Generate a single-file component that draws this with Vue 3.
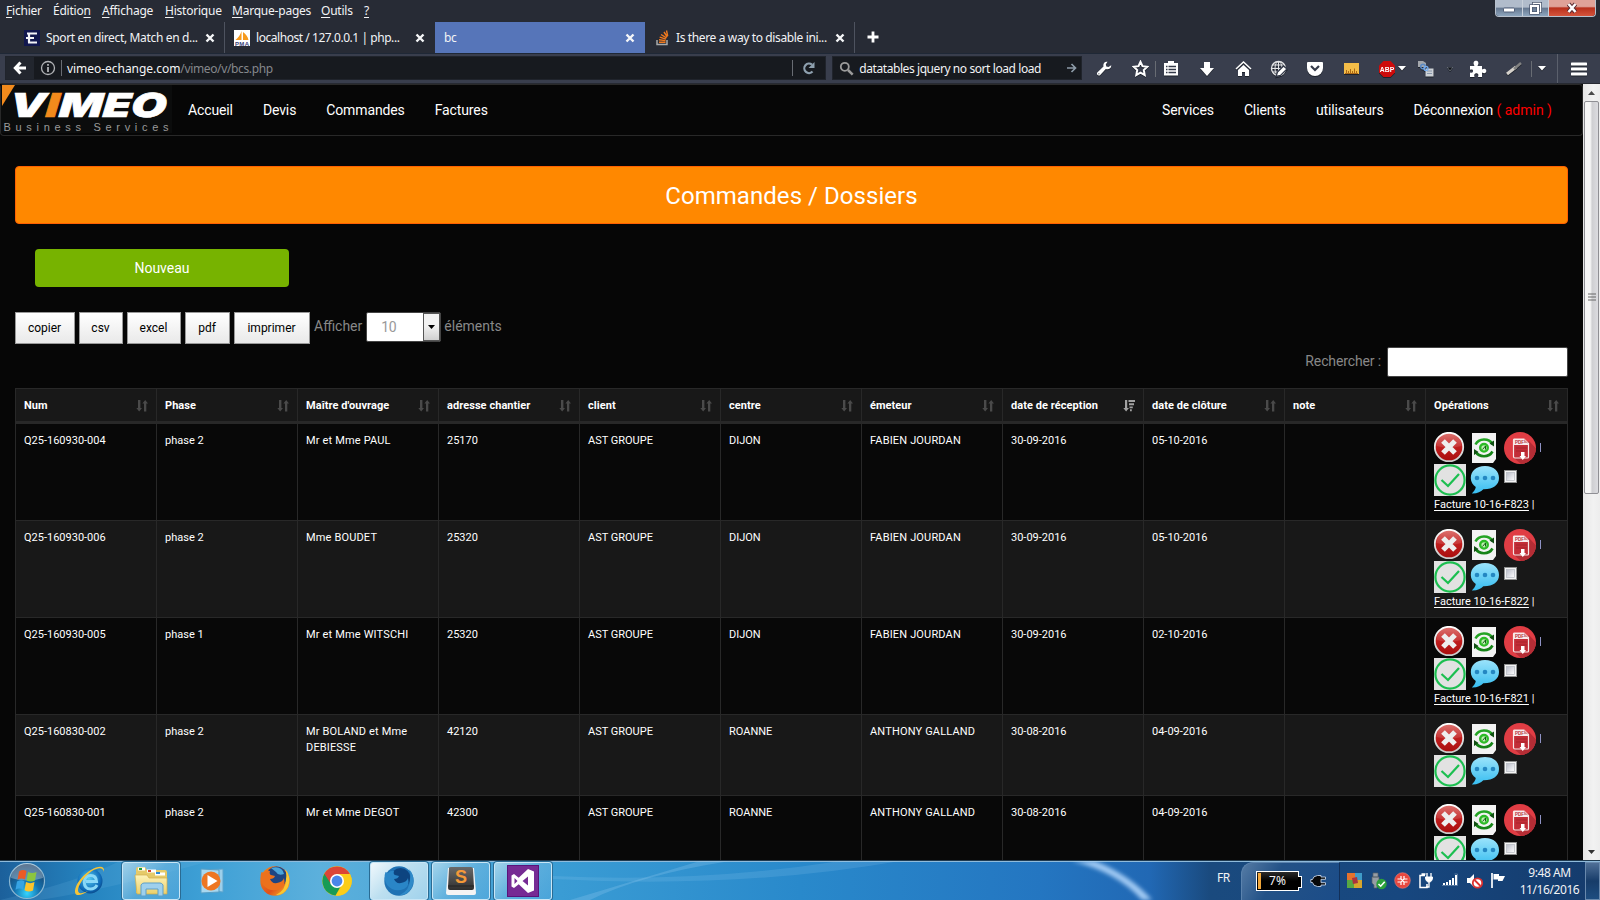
<script setup>
const menu = [['F', 'ichier', ''], ['', 'Éditio', 'n'], ['A', 'ffichage', ''], ['H', 'istorique', ''], ['M', 'arque-pages', ''], ['O', 'utils', ''], ['?', '', '']]
const menuWidths = [47, 49, 63, 67, 89, 43, 20]
const navLeft = ['Accueil', 'Devis', 'Commandes', 'Factures']
const exportsList = [['copier', 60], ['csv', 44], ['excel', 54], ['pdf', 45], ['imprimer', 76]]
const heads = ['Num', 'Phase', "Maître d'ouvrage", 'adresse chantier', 'client', 'centre', 'émeteur', 'date de réception', 'date de clôture', 'note', 'Opérations']
const rows = [
  { cells: ['Q25-160930-004', 'phase 2', 'Mr et Mme PAUL', '25170', 'AST GROUPE', 'DIJON', 'FABIEN JOURDAN', '30-09-2016', '05-10-2016', ''], bill: 'Facture 10-16-F823' },
  { cells: ['Q25-160930-006', 'phase 2', 'Mme BOUDET', '25320', 'AST GROUPE', 'DIJON', 'FABIEN JOURDAN', '30-09-2016', '05-10-2016', ''], bill: 'Facture 10-16-F822' },
  { cells: ['Q25-160930-005', 'phase 1', 'Mr et Mme WITSCHI', '25320', 'AST GROUPE', 'DIJON', 'FABIEN JOURDAN', '30-09-2016', '02-10-2016', ''], bill: 'Facture 10-16-F821' },
  { cells: ['Q25-160830-002', 'phase 2', 'Mr BOLAND et Mme DEBIESSE', '42120', 'AST GROUPE', 'ROANNE', 'ANTHONY GALLAND', '30-08-2016', '04-09-2016', ''], bill: '' },
  { cells: ['Q25-160830-001', 'phase 2', 'Mr et Mme DEGOT', '42300', 'AST GROUPE', 'ROANNE', 'ANTHONY GALLAND', '30-08-2016', '04-09-2016', ''], bill: '' },
]
</script>

<template>
  <div class="screen">
    <svg class="defs" width="0" height="0">
      <defs>
        <linearGradient id="gRed" x1="0" y1="0" x2="0" y2="1"><stop offset="0" stop-color="#d9605c" /><stop offset=".45" stop-color="#c22020" /><stop offset="1" stop-color="#a80d0d" /></linearGradient>
        <linearGradient id="gRing" x1="0" y1="0" x2="0" y2="1"><stop offset="0" stop-color="#fff" /><stop offset="1" stop-color="#c9c9c9" /></linearGradient>
        <linearGradient id="gBubble" x1="0" y1="0" x2="0" y2="1"><stop offset="0" stop-color="#9be3fb" /><stop offset="1" stop-color="#37bdf0" /></linearGradient>
        <linearGradient id="gCheck" x1="0" y1="0" x2="1" y2="1"><stop offset="0" stop-color="#b9bcc8" /><stop offset="1" stop-color="#fff" /></linearGradient>
        <linearGradient id="gFolder" x1="0" y1="0" x2="0" y2="1"><stop offset="0" stop-color="#fdf3b8" /><stop offset="1" stop-color="#ecd06c" /></linearGradient>
        <radialGradient id="gOrb" cx=".5" cy=".85" r=".8"><stop offset="0" stop-color="#35d5ff" /><stop offset=".45" stop-color="#1471ae" /><stop offset="1" stop-color="#1a3f66" /></radialGradient>
        <linearGradient id="gFox" x1="0" y1="0" x2="1" y2="1"><stop offset="0" stop-color="#f28a1c" /><stop offset=".6" stop-color="#e2521b" /><stop offset="1" stop-color="#f9c32c" /></linearGradient>
        <linearGradient id="gSub" x1="0" y1="0" x2="0" y2="1"><stop offset="0" stop-color="#6a6a6a" /><stop offset="1" stop-color="#2f2f2f" /></linearGradient>
        <radialGradient id="gIE" cx=".45" cy=".4" r=".7"><stop offset="0" stop-color="#55cdf5" /><stop offset=".7" stop-color="#0d67b5" /><stop offset="1" stop-color="#083970" /></radialGradient>
      </defs>
      <symbol id="sx" viewBox="0 0 10 10"><path d="M1.5 1.5 8.5 8.5M8.5 1.5 1.5 8.5" stroke="#f5f6f8" stroke-width="2.4" /></symbol>
    </svg>

    <header class="menubar">
      <div class="menu">
        <span v-for="(m, i) in menu" :key="i" :style="{ width: menuWidths[i] + 'px' }"><u>{{ m[0] }}</u>{{ m[1] }}<u>{{ m[2] }}</u></span>
      </div>
      <div class="winbtns">
        <span class="wb min"><svg width="14" height="8"><rect x="1.5" y="2" width="11" height="4" rx="1" fill="#fff" stroke="#53607a" /></svg></span>
        <span class="wb mid"><svg width="13" height="13" fill="none"><path d="M4.5 3V1.5h7v8H10" stroke="#4a566d" stroke-width="3" /><path d="M4.5 3V1.5h7v8H10" stroke="#fff" stroke-width="1.4" /><rect x="2" y="4" width="7" height="7" stroke="#4a566d" stroke-width="3.4" /><rect x="2" y="4" width="7" height="7" stroke="#fff" stroke-width="2" /></svg></span>
        <span class="wb shut"><svg width="14" height="12"><path d="m3.5 2 7 8m0-8-7 8" stroke="#5b2e33" stroke-width="4.4" /><path d="m3.5 2 7 8m0-8-7 8" stroke="#fff" stroke-width="2.5" /></svg></span>
      </div>
    </header>

    <div class="tabs">
      <div class="tab t1">
        <svg width="16" height="16"><rect width="16" height="16" fill="#11174e" /><path d="M3 3.5h10M5 3.5v9M2 8h8M4 12.5h9" stroke="#f3f4f8" stroke-width="2.2" /></svg>
        <span class="tt">Sport en direct, Match en d...</span><svg class="x" width="10" height="10"><use href="#sx" /></svg>
      </div>
      <div class="tab t2">
        <svg width="16" height="16"><rect width="16" height="16" fill="#fff" /><path d="M7.5 1v9H1.5C4 8 6.5 5 7.5 1zM9 2c3 2 5 5 5.500 8H9z" fill="#f79a1c" /><text x="1" y="15.600" font-family="Liberation Sans" font-size="6" font-weight="700" textLength="14" fill="#3a3e78">PMA</text></svg>
        <span class="tt">localhost / 127.0.0.1 | php...</span><svg class="x" width="10" height="10"><use href="#sx" /></svg>
      </div>
      <div class="tab t3"><span class="tt">bc</span><svg class="x" width="10" height="10"><use href="#sx" /></svg></div>
      <div class="tab t4">
        <svg width="13" height="16" fill="none"><path d="M1 10v4.500h10V10" stroke="#a9aaab" stroke-width="1.500" /><path d="M3 12.300h6.500M3 9.800l6.500.8M3.700 7.200l6.300 1.900M5 4.500l5.500 3.400M8 2l3.300 5M10.500 .5l1.200 5.500" stroke="#f17a1e" stroke-width="1.400" /></svg>
        <span class="tt">Is there a way to disable ini...</span><svg class="x" width="10" height="10"><use href="#sx" /></svg>
      </div>
      <svg class="plus" width="14" height="14"><path d="M7 1.500v11M1.500 7h11" stroke="#fff" stroke-width="2.800" /></svg>
    </div>

    <div class="toolbar">
      <div class="url">
        <span class="back"><svg width="14" height="14" fill="none" stroke="#fff" stroke-width="3"><path d="M7.500 1.500 2.300 7l5.200 5.500M2.500 7H13" /></svg></span>
        <svg class="info" width="16" height="16" fill="none" stroke="#b1b3b6"><circle cx="8" cy="8" r="6.500" stroke-width="1.300" /><path d="M8 7v5M8 4v1.800" stroke-width="1.800" /></svg>
        <i class="vr"></i>
        <span class="addr"><b>vimeo-echange.com</b>/vimeo/v/bcs.php</span>
        <i class="vr r"></i>
        <svg class="reload" width="14" height="14" fill="none"><path d="M10.500 10.500A4.700 4.700 0 1 1 10 3.700" stroke="#8ea0af" stroke-width="2.200" /><path d="M12.500 1v6h-6z" fill="#8ea0af" /></svg>
      </div>
      <div class="search">
        <svg width="15" height="15" fill="none" stroke="#9b9b9b"><circle cx="5.800" cy="5.800" r="4" stroke-width="1.800" /><path d="m9 9 4.700 4.700" stroke-width="2.500" /></svg>
        <span>datatables jquery no sort load load</span>
        <svg width="10" height="10" fill="none" stroke="#8d9ba8" stroke-width="1.700"><path d="M0 5h8M4.500 1l4 4-4 4" /></svg>
      </div>
      <div class="tools">
        <span class="w36"><svg width="16" height="16"><path d="M15.200 4.200 12.500 6 10.300 5.500 9.800 3.500 11.500.8C8.600.2 6.700 2.700 7.500 5.500L1.300 11.500c-1.200 1.500.8 4 2.700 2.700L9.800 8c2.900 1.200 5.800-.7 5.400-3.800zM3.500 12.800a.6.6 0 1 1-1.200 0 .6.6 0 0 1 1.200 0" fill="#fff" /></svg></span>
        <span class="w36"><svg width="17" height="17"><path d="m8.500 1.800 2 4.400 4.800.6-3.500 3.300.9 4.900-4.200-2.400-4.200 2.400.9-4.900-3.500-3.300 4.800-.6z" fill="none" stroke="#fff" stroke-width="2" /></svg></span>
        <i class="vr star"></i>
        <span class="w36 list"><svg width="16" height="17"><path d="M1 3h4V1h6v2h4v12.500H1z" fill="#fff" /><path d="M3 6.500h1.500m1 0H13M3 9.500h1.500m1 0H13M3 12.500h1.500m1 0H13" stroke="#343a49" stroke-width="1.400" /></svg></span>
        <span class="w36"><svg width="16" height="16"><path d="M5 1h6v6h4l-7 8-7-8h4z" fill="#fff" /></svg></span>
        <span class="w36"><svg width="17" height="16"><path d="m1 8 7.500-7L16 8" fill="none" stroke="#fff" stroke-width="1.500" /><path d="m3 9 5.500-5L14 9v6h-4v-4H7v4H3z" fill="#fff" /></svg></span>
        <span class="w36"><svg width="18" height="18" fill="none" stroke="#e4e5e7"><circle cx="8.500" cy="8.500" r="7" stroke-width="1.400" /><ellipse cx="8.500" cy="8.500" rx="3.500" ry="7" /><path d="M8.500 1v15M1.500 8.500h14M2.500 5h12M2.500 12h12" /><path d="m6 16.500 1.500-4.500 6-6 3.500 3-6.500 6.500z" fill="#fff" stroke="#343a49" stroke-width="1.300" /></svg></span>
        <span class="w36"><svg width="18" height="16"><path d="M2 1h14q1 0 1 1v5a8 8 0 0 1-16 0V2q0-1 1-1z" fill="#fff" /><path d="m5 5 4 4 4-4" fill="none" stroke="#343a49" stroke-width="2.200" /></svg></span>
        <span class="w36"><svg width="15" height="12"><rect width="15" height="11" fill="#f4bd48" /><path d="M1 10.500h13M2.500 10V7M4.500 10V8M6.500 10V6M8.500 10V8M10.500 10V5.500M12.500 10V8" stroke="#ad6815" /></svg></span>
        <span class="w36 abp"><svg width="18" height="18"><path d="M5.500 1h7L17 5.500v7L12.500 17h-7L1 12.500v-7z" fill="#cd0b0b" /><text x="1.800" y="11.800" fill="#fff" font-size="7.500" font-weight="700" font-family="Liberation Sans" textLength="14.500" lengthAdjust="spacingAndGlyphs">ABP</text></svg><svg class="caret" width="8" height="5"><path d="M0 0h8L4 4.500z" fill="#fff" /></svg></span>
        <span class="gray"><svg width="17" height="17"><path d="M1 1h5l3 2v4H1z" fill="#a4a7ac" /><rect x="8.500" y="8.500" width="8" height="8" fill="#cdd1d6" /><path d="M10 11h5M10 13.500h5" stroke="#8897ab" /><circle cx="6" cy="6.500" r="2.300" fill="none" stroke="#5d8bc4" stroke-width="1.500" /><circle cx="9" cy="8.500" r="2" fill="none" stroke="#78aef0" stroke-width="1.300" /></svg></span>
        <span class="tiny"><svg width="6" height="4"><path d="M0 0h6L3 4z" fill="#11141a" stroke="#8a909b" stroke-width=".6" /></svg></span>
        <span class="w36 puzzle"><svg width="18" height="18"><path d="M1 6h4.500C3.500 2.800 5 .8 7 .8s3.500 2 1.500 5.200H13v3.500c3-1.500 4.300-.3 4.300 1.500S15.700 14 13 12.500V17H9c1-2.800-.2-3.700-1.700-3.700S4.600 14.500 5.500 17H1v-4.500c2.500.8 3-.3 3-1.500S3.500 9 1 9.800z" fill="#fff" /></svg></span>
        <span class="w36 pen"><svg width="16" height="14"><path d="m1 12 9-7" stroke="#d5d1cb" stroke-width="3" /><path d="m8 7 7-6" stroke="#818181" stroke-width="2.500" /></svg></span>
        <i class="vr p"></i>
        <span class="drop"><svg width="8" height="5"><path d="M0 0h8L4 4.500z" fill="#fff" /></svg></span>
        <span class="burger"><svg width="16" height="14"><path d="M1 2h14M1 7h14M1 12h14" stroke="#fff" stroke-width="3" stroke-linecap="round" /></svg></span>
      </div>
    </div>

    <div class="view">
      <main class="page">
        <nav class="navbar">
          <svg class="logo" width="171" height="48">
            <rect width="171" height="48" fill="#0b0c0c" />
            <path d="M1 0h13L1 21z" fill="#f28a1c" />
            <g transform="translate(8 32) skewX(-4)"><text x="0" y="0" font-family="Inter" font-size="33" font-weight="900" font-style="italic" fill="#fff" stroke="#fff" stroke-width=".6" textLength="157" lengthAdjust="spacingAndGlyphs">V<tspan fill="#f28a1c" stroke="#f28a1c">I</tspan>MEO</text></g>
            <text x="2.500" y="45.500" font-family="Liberation Sans" font-size="11" fill="#9a9a9a" textLength="165">Business Services</text>
          </svg>
          <a v-for="n in navLeft" :key="n">{{ n }}</a>
          <span class="grow"></span>
          <a>Services</a><a>Clients</a><a>utilisateurs</a><a>Déconnexion <em>( admin )</em></a>
        </nav>
        <h1 class="banner">Commandes / Dossiers</h1>
        <div class="new">Nouveau</div>
        <div class="controls">
          <button v-for="b in exportsList" :key="b[0]" :style="{ width: b[1] + 'px' }">{{ b[0] }}</button>
          <label>Afficher</label>
          <span class="select"><span>10</span><i><svg width="7" height="4"><path d="M0 0h7L3.500 4z" fill="#000" /></svg></i></span>
          <label>éléments</label>
        </div>
        <div class="find"><label>Rechercher :</label><span class="input"></span></div>
        <div class="table">
          <div class="tr th">
            <div v-for="(h, i) in heads" :key="h" class="td">
              <span>{{ h }}</span>
              <svg v-if="i !== 7" width="12" height="12"><path d="M2 0h2.400v8H6L3.200 11.500.3 8H2zM8 11.500h2.300v-8H12L9.200 0 6.400 3.500H8z" fill="#4a4a4a" /></svg>
              <svg v-else width="12" height="12"><path d="M2 0h2.200v8H6l-2.900 3.500L.3 8H2zM5.500 0H12v2H5.500zM6 3.200h5v2H6zM6.500 6.400h3.300v1.800H6.500zM7 9.300h1.800v1.900H7z" fill="#a1a1a1" /></svg>
            </div>
          </div>
          <div v-for="(r, ri) in rows" :key="ri" class="tr" :class="{ alt: ri % 2 }">
            <div v-for="(c, ci) in r.cells" :key="ci" class="td cell" :class="{ name: ci === 2 || ci === 6 }">{{ c }}</div>
            <div class="td ops">
              <div class="line">
                <svg width="32" height="32"><circle cx="15" cy="15" r="14.200" fill="url(#gRed)" stroke="url(#gRing)" stroke-width="1.800" /><path d="M2.500 14a12.500 12.500 0 0 1 25 0q-12 3-25 0" fill="#fff" opacity=".12" /><path d="m9 9 12 12M21 9 9 21" stroke="#eee" stroke-width="5.200" /></svg>
                <svg class="doc" width="26" height="32"><path d="M0 1h24v26l-3 4H0z" fill="#f3f3f3" /><g fill="none" stroke-width="2.600"><path d="M3.500 12.500A9.500 8.500 0 0 1 20.500 12" stroke="#24a424" /><path d="M20.500 19.500A9.500 8.500 0 0 1 3.500 19.500" stroke="#158316" /><circle cx="12" cy="15.800" r="3.800" fill="#bdf0b0" stroke="#2dbb27" stroke-width="2.400" /></g><path d="m17.500 11.500 4.500-3v6zM6.500 20l-4.500 3v-6z" fill="#124f14" /><path d="m10.500 17.500 3-3.500v3.500" fill="none" stroke="#155b18" /></svg>
                <svg class="pdf" width="32" height="32"><circle cx="16" cy="16" r="16" fill="#e03d44" /><path d="M25 9l7 7.500A16 16 0 0 1 17 32l-7-6z" fill="#b52d35" /><path d="M10 7h10l4.500 4.500V25q0 1-1 1H11q-1.500 0-1.500-1.500V8q0-1 .5-1z" fill="#c22d37" stroke="#f7e8e8" stroke-width="1.200" /><path d="M10 7h10l4 4.500V13H10z" fill="#f7ecec" /><path d="M20 7v4h4z" fill="#d68e90" /><text x="11" y="11.800" font-family="Liberation Sans" font-weight="700" font-size="4.500" fill="#b52d35" textLength="9">PDF</text><path d="M12 16h11M12 19h11" stroke="#a9252c" /><path d="M17 20h3.500v4H22l-3.200 4-3.300-4H17z" fill="#fff" /></svg>
                <i class="bar"></i>
              </div>
              <div class="line second">
                <svg width="32" height="32"><rect width="32" height="32" fill="#e2e2e2" /><circle cx="16" cy="16" r="14.600" fill="none" stroke="#1cbf50" stroke-width="2.200" /><path d="m7.500 16 6.500 6L25 10" fill="none" stroke="#1cbf50" stroke-width="2.200" /></svg>
                <svg class="bubble" width="30" height="32"><path d="M15 2C6 2 .8 7 .8 14c0 4 2 7 5 9-.3 2.500-2 4.500-4 6.500 5 .3 9-1.500 11.500-4.200C23 25.500 29 21 29 14S24 2 15 2z" fill="url(#gBubble)" /><g fill="#2487c2"><circle cx="7" cy="14" r="2.300" /><circle cx="15" cy="14" r="2.300" /><circle cx="23" cy="14" r="2.300" /></g></svg>
                <svg class="cb" width="13" height="13"><rect x=".5" y=".5" width="12" height="12" fill="#f4f4f4" stroke="#8e8f8f" /><rect x="2.500" y="2.500" width="8" height="8" fill="url(#gCheck)" stroke="#b6b9c0" stroke-width=".7" /></svg>
              </div>
              <div v-if="r.bill" class="bill"><a>{{ r.bill }}</a> |</div>
            </div>
          </div>
        </div>
      </main>
      <aside class="scroll">
        <svg width="17" height="17"><path d="m5 11 3.500-4 3.500 4z" fill="#4a4a4a" /></svg>
        <div class="thumb"><svg width="8" height="9"><path d="M0 1h8M0 4h8M0 7h8" stroke="#666" /></svg></div>
        <span class="grow"></span>
        <svg width="17" height="17"><path d="m5 7 3.500 4L12 7z" fill="#333" /></svg>
      </aside>
    </div>

    <footer class="taskbar">
      <svg class="streaks" width="1600" height="39" preserveAspectRatio="none"><path d="M120 0h90Q110 28 40 39H0Q80 20 120 0z" fill="#7fc3e8" opacity=".15" /><path d="M590 39Q640 14 730 0h-30Q640 18 570 39z" fill="#9bd0f5" opacity=".25" /><path d="M553 18Q740 28 900 0h-60Q700 22 553 15z" fill="#9bd0f5" opacity=".17" /><path d="M1072 0q45 11 70 39h10Q1130 14 1095 0z" fill="#b9dcff" opacity=".85" class="glow" /></svg>
      <div class="orb"><svg width="38" height="38"><circle cx="19" cy="19" r="17.500" fill="url(#gOrb)" stroke="#8bb7d2" stroke-width="1.200" /><path d="M3 16a16 15 0 0 1 32 0q-16 5-32 0" fill="#fff" opacity=".3" /><path d="M11 9.500q4-2.500 7.500-.5l-1.500 8.500q-4-2-7.500.3z" fill="#ed5b25" /><path d="M20 10q4 2 8.500 0L27 18.500q-4 2-8.500 0z" fill="#8bc53f" /><path d="M9 19.500q4-2.500 7.500-.3L15 27.500q-3.500-2-7.500.2z" fill="#36a4e4" /><path d="M18 20q4 2.300 8.500 0L25 28.500q-4.500 2-8.500-.3z" fill="#fcc42c" /></svg></div>
      <div class="app"><svg width="36" height="36"><circle cx="19" cy="18" r="12.500" fill="url(#gIE)" /><path d="M26 22q-2 4-6.500 4-6 0-6.300-7 .5-6.500 6.500-6.500 5.500 0 5.800 6H15" fill="none" stroke="#8ad8f7" stroke-width="3" /><path d="M33 9Q34 2 25 4.500C15 8 4 20 4 29c.5 6 9 2 13-1-7 3-10 3-10-1C8 19 19 7 27 5.500q5-1 6 3.500z" fill="#f6c438" /></svg></div>
      <div class="app on"><svg width="36" height="32"><path d="M3 4q0-2 2-2h7l2 3h18q2 0 2 2v21H3z" fill="#e5ca69" /><path d="M5 4h7M14 6h9M22 9h10" stroke="#fff" stroke-width="3" /><path d="M6 4h3" stroke="#1a9a3c" stroke-width="2" /><path d="M15 6h3" stroke="#d5422a" stroke-width="2" /><path d="M23 8h4" stroke="#2a8ad5" stroke-width="2" /><path d="M2 10h12l2 3h18v16H4z" fill="url(#gFolder)" stroke="#cfae4b" stroke-width=".7" /><path d="M8 31V20q1-2 3-2h16q2 0 3 2v11h-5v-7H13v7z" fill="#9ed0ed" stroke="#5c9fc9" /></svg></div>
      <div class="app"><svg width="34" height="32"><path d="m7 5 20-1v23l-20-2z" fill="#9dcfea" stroke="#5ca4cd" /><path d="m5 4 18 1v22l-18 1z" fill="#a8d8f0" stroke="#599fc5" /><circle cx="15" cy="16" r="9.500" fill="#ee7621" /><path d="m11.500 10 10 6-10 6z" fill="#fff" /></svg></div>
      <div class="app"><svg width="32" height="32"><circle cx="16" cy="16" r="14.700" fill="url(#gFox)" /><circle cx="17.500" cy="12" r="10.500" fill="#1d4583" /><path d="M12 3Q23 0 25 9q-6 2-8-2z" fill="#4aa5db" /><path d="M2.500 7 5 8q3-3 6-2-1 3 1 4l4 1q-1 3-5 3 2 5 7 4 6-1 7-5 2 8-4 11-10 4-17-4-4-7-1.500-13z" fill="#ec711d" /><path d="M26 4q7 8 3 18-5 9-12 8 10-5 10-16 1-6-1-10z" fill="#fac831" /></svg></div>
      <div class="app"><svg width="32" height="32"><circle cx="16" cy="16" r="14.700" fill="#fbc916" /><path d="M3.300 8.700A14.700 14.700 0 0 0 14.500 30.600L21 19z" fill="#179b56" /><path d="M16 9h12.900A14.700 14.700 0 0 1 15 30.700L22 19.300z" fill="#fccd1a" /><path d="M3.300 8.700A14.700 14.700 0 0 1 28.900 9H16l-6 10z" fill="#dc4537" /><circle cx="16" cy="16" r="7" fill="#fff" /><circle cx="16" cy="16" r="5.400" fill="#4a86ea" /></svg></div>
      <div class="app on bright"><svg width="32" height="32"><circle cx="16" cy="16" r="14.700" fill="#1f72b4" /><circle cx="17.500" cy="13" r="10" fill="#0d4480" /><path d="M2.500 7 5 8q3-3 6-2-1 3 1 4l4 1q-1 3-5 3 2 5 7 4 6-1 7-5 2 8-4 11-10 4-17-4-4-7-1.500-13z" fill="#2a86c7" /><path d="M26 4q7 8 3 18-5 9-12 8 10-5 10-16 1-6-1-10z" fill="#2f8ac9" /></svg></div>
      <div class="app on"><svg width="32" height="30"><path d="M3 2h26l2 25q0 2-2 2H3q-2 0-2-2z" fill="#f4f4f4" /><path d="M4 2q0-1 2-1h20q2 0 2 2l1 19q0 2-2 2H5q-2 0-2-2z" fill="url(#gSub)" /><text x="10" y="17" font-family="Liberation Sans" font-size="18" font-weight="700" fill="#f49938" textLength="12" lengthAdjust="spacingAndGlyphs">S</text><path d="M3 20h26" stroke="#222" /></svg></div>
      <div class="app on"><svg width="32" height="32"><rect x=".5" y=".5" width="31" height="31" fill="#762b94" stroke="#5a137a" /><path fill-rule="evenodd" d="m21 4 6 2.500v19L21 28l-9.300-8.700L7 23l-2.500-1.500v-11L7 9l4.700 3.700zM21 11.500 15.500 16l5.500 4.500zM7.500 13v6l3-3z" fill="#fff" /></svg></div>
      <span class="grow"></span>
      <span class="lang">FR</span>
      <div class="power">
        <span class="battery"><i></i>7%</span>
        <svg width="17" height="14"><path d="M11 3V1.500H7.500Q3 2 2.500 5.500H.8v3h1.700Q3 12 7.500 12.500H11V11h4.500V8.700H11V5.300h4.500V3z" fill="#080808" stroke="#c4d2e6" stroke-width=".9" /></svg>
      </div>
      <div class="tray">
        <span><svg width="17" height="17"><path d="M1 1h8v7H1z" fill="#e4722d" /><path d="M9 1h7v8H9z" fill="#3f9bc8" /><path d="M1 8h7v8H1z" fill="#58a843" /><path d="M8 8h8v8H8z" fill="#d7a62d" /><path d="M6 6 11 5l1 6-5 1z" fill="#a9333d" /></svg></span>
        <span><svg width="17" height="18"><path d="M3 1h5v4H3zM2 5h7v6l-2 2v3H4v-3l-2-2z" fill="#969da5" stroke="#575f69" stroke-width=".7" /><circle cx="11.500" cy="12" r="5.200" fill="#2ca13a" /><path d="m8.500 12 2.200 2.200 4-4.500" fill="none" stroke="#fff" stroke-width="1.600" /></svg></span>
        <span><svg width="17" height="17"><circle cx="8.500" cy="8.500" r="7.800" fill="#e7473f" stroke="#ef817b" stroke-width=".6" /><path d="M7 4v3H3.500M10 4v3h3.500M7 13v-3H3.500M10 13v-3h3.500M7 7l3 3M10 7l-3 3" fill="none" stroke="#fff" stroke-width="1.200" /></svg></span>
        <span><svg width="16" height="17" fill="none" stroke="#fff"><path d="M7 3.500H2v12h7V12M3.500 2h4" stroke-width="1.500" /><path d="M9 1v4M13 1v4M11 10v5H8" stroke-width="1.300" /><path d="M7.500 5h7q0 5-3.500 5t-3.500-5z" fill="#fff" /></svg></span>
        <span><svg width="17" height="15"><path d="M1 11h2v2H1zM4 10h2v3H4zM7 8h2v5H7zM10 6h2v7h-2zM13 3h2v10h-2z" fill="#fff" /><path d="M12.500 2h3v11.500H0" fill="none" stroke="#809ab8" stroke-width=".6" /></svg></span>
        <span><svg width="17" height="17"><path d="M1 6h3l4-4v13l-4-4H1z" fill="#fff" /><circle cx="11.500" cy="11" r="4.700" fill="#fff" stroke="#db3030" stroke-width="1.800" /><path d="m8.500 8 6 6" stroke="#db3030" stroke-width="1.800" /></svg></span>
        <span><svg width="16" height="17"><path d="M2 1v15" stroke="#fff" stroke-width="1.700" /><path d="M3.500 2H9v2h6l-2.500 5H8V7.500H3.500z" fill="#fff" /></svg></span>
      </div>
      <div class="clock"><span>9:48 AM</span><span>11/16/2016</span></div>
      <div class="desk"></div>
    </footer>
  </div>
</template>

<style>
body { margin: 0; background: #060606; overflow: hidden; }
</style>
<style scoped>
* { box-sizing: border-box; }
.defs { position: absolute; }
.screen { width: 1600px; height: 900px; overflow: hidden; display: flex; flex-direction: column; background: #060606; font-family: "Noto Sans", "Open Sans", sans-serif; font-size: 12px; color: #f2f3f5; }
svg { display: block; flex: none; }
.grow { flex: 1; }
.menubar { height: 22px; flex: none; background: #272b35; display: flex; justify-content: space-between; }
.menu { display: flex; padding: 1px 0 0 6px; line-height: 20px; letter-spacing: -.22px; }
.menu u { text-underline-offset: 2px; }
.menu span { white-space: nowrap; }
.winbtns { display: flex; height: 17px; width: 101px; margin-right: 4px; border: 1px solid #b8c1cd; border-top: 0; border-radius: 0 0 4px 4px; overflow: hidden; }
.wb { display: flex; align-items: center; justify-content: center; width: 27px; background: linear-gradient(#b1bccb 0 45%, #65778f 50%, #8da5bd); border-right: 1px solid #c8d0da; }
.min { align-items: flex-end; padding-bottom: 2px; }
.shut { width: 46px; border: 0; background: linear-gradient(#dfa298 0 40%, #b8301c 50%, #d5543c); }
.tabs { height: 31px; flex: none; background: #272b35; display: flex; padding-left: 15px; }
.tab { width: 210px; height: 31px; display: flex; align-items: center; border-right: 1px solid #4e535f; }
.tab .x { margin-left: auto; margin-right: 9px; }
.tab.t3 .x { margin-right: 10px; }
.tt { white-space: nowrap; margin-left: 6px; letter-spacing: -.34px; }
.t1 { padding-left: 9px; } .t2 { padding-left: 9px; border-color: transparent; }
.t2 .tt { letter-spacing: -.45px; }
.t3 { background: #5675b9; padding-left: 3px; border: 0; } .t4 { padding-left: 11px; }
.t4 .tt { letter-spacing: -.37px; margin-left: 7px; }
.plus { margin: 8px 0 0 11px; }
.toolbar { height: 31px; flex: none; background: #393e4d; border-top: 1px solid #1f2836; border-bottom: 1px solid #272a32; display: flex; align-items: center; padding-left: 5px; }
.url, .search { height: 24px; background: #171a1f; display: flex; align-items: center; border: 1px solid #20242c; margin-top: -1px; }
.url { width: 822px; }
.back { width: 28px; height: 22px; background: #22262e; display: flex; align-items: center; justify-content: center; }
.info { margin-left: 6px; margin-right: 5px; }
.vr { width: 1px; height: 16px; background: #686c73; flex: none; }
.addr { margin-left: 5px; padding-top: 1px; color: #85888c; letter-spacing: -.36px; }
.addr b { font-weight: 400; color: #f4f5f6; letter-spacing: -.04px; }
.vr.r { margin-left: auto; }
.reload { margin: 0 9px 0 9px; }
.search { width: 250px; margin-left: 6px; padding: 0 4px 0 6px; }
.search span { margin-left: 5px; padding-top: 1px; flex: 1; white-space: nowrap; letter-spacing: -.42px; }
.tools { display: flex; align-items: center; height: 29px; margin-left: 4px; }
.tools > span { display: flex; align-items: center; justify-content: center; height: 29px; flex: none; filter: drop-shadow(0 1px 0 #1d222b); }
.w36 { width: 36px; }
.vr.star { margin-left: -3px; } .list { margin-left: -3px; }
.abp { position: relative; }
.caret { position: absolute; left: 29px; top: 12px; }
.gray { width: 41px; } .tiny { width: 8px; } .puzzle { margin-left: 6px; }
.vr.p { margin-left: -1px; } .drop { width: 19px; } .burger { width: 43px; margin-left: 6px; border-left: 1px solid #5b606c; }
.view { height: 776px; flex: none; display: flex; overflow: hidden; }
.page { width: 1583px; font-family: Roboto, sans-serif; background: #060606; overflow: hidden; }
.navbar { height: 52px; border: 1px solid #282828; border-top-color: #2a2a2a; border-radius: 4px; display: flex; align-items: center; font-size: 14px; padding-right: 15px; color: #fff; }
.navbar .logo { margin-right: 1px; align-self: flex-start; }
.navbar a { padding: 0 15px; white-space: nowrap; letter-spacing: -.12px; }
.navbar em { font-style: normal; color: #f00; letter-spacing: 0; }
.banner { margin: 30px 15px 25px; height: 58px; border: 1px solid #ff6000; border-radius: 4px; background: #f80; color: #fff; font-size: 24px; font-weight: 400; line-height: 58px; text-align: center; letter-spacing: .05px; }
.new { margin-left: 35px; width: 254px; height: 38px; background: #77b300; border-radius: 4px; line-height: 38px; text-align: center; font-size: 14px; color: #fff; }
.controls { display: flex; height: 33px; margin: 25px 0 0 15px; font-size: 14px; color: #888; }
.controls button { height: 32px; margin: 0 4px 0 0; padding: 0 1px 0 0; border: 1px solid #999; background: linear-gradient(#fff, #e9e9e9); font: 12px Roboto, sans-serif; color: #000; }
.controls label { line-height: 28px; }
.select { margin: 0 3px 0 4px; width: 75px; height: 30px; border: 1px solid #444; border-radius: 2px; background: #fff; display: flex; align-items: center; justify-content: space-between; }
.select span { margin-left: 14px; color: #999; letter-spacing: -.4px; }
.select i { width: 17px; height: 28px; border: 1px solid #555; background: linear-gradient(#f2f2f2 0 45%, #d0d0d0); display: flex; align-items: center; justify-content: center; }
.find { display: flex; justify-content: flex-end; margin: 2px 15px 0; font-size: 14px; color: #888; }
.find label { line-height: 29px; margin-right: 6px; letter-spacing: -.13px; }
.input { width: 181px; height: 30px; border: 1px solid #444; border-radius: 2px; background: #fff; }
.table { margin: 11px 15px 0; font-size: 11px; line-height: 16px; color: #fff; border-right: 1px solid #282828; }
.tr { display: grid; grid-template-columns: repeat(10, 141px) 142px; border-bottom: 1px solid #282828; background: #080808; }
.tr.alt { background: #181818; }
.td { border-left: 1px solid #282828; padding: 8px; }
.cell { padding: 9px 8px 7px; }
.name { letter-spacing: .16px; }
.th { background: #181818; height: 36px; border-top: 1px solid #282828; border-bottom: 3px solid #282828; font-weight: 700; }
.th .td { display: flex; justify-content: space-between; align-items: flex-start; white-space: nowrap; padding-top: 9px; letter-spacing: .06px; }
.th svg { margin-top: 2px; }
.line { display: flex; height: 32px; }
.doc { margin-left: 6px; } .pdf { margin-left: 6px; }
.bar { width: 1px; height: 9px; margin: 11px 0 0 4px; background: #8f92c4; }
.bubble { margin-left: 4px; } .cb { margin: 6px 0 0 4px; }
.bill { white-space: nowrap; padding-top: 1px; margin-bottom: -1px; } .bill a { text-decoration: underline; text-underline-offset: 2px; }
.scroll { width: 17px; background: linear-gradient(90deg, #e6e6e6, #f2f2f2 60%, #ededed); display: flex; flex-direction: column; }
.thumb { width: 15px; height: 393px; margin: 0 1px; border: 1px solid #8f8f94; border-radius: 2px; background: linear-gradient(90deg, #f6f6f6 40%, #cfcfd2 55%, #dcdce0); display: flex; align-items: center; justify-content: center; }
.taskbar { height: 40px; flex: none; position: relative; border-top: 1px solid #1f3a50; box-shadow: inset 0 1px #8fbbdb; background: linear-gradient(90deg, #1c609b 0, #2584c0 90px, #3d9fd5 200px, #5cb0dc 320px, #3a9cd4 560px, #2989cb 800px, #2476c1 1040px, #2168b4 1150px, #1a4a7e 1210px, #17477f 1400px, #153b6c 1600px); display: flex; align-items: center; }
.streaks { position: absolute; left: 0; top: 0; }
.glow { filter: blur(2px); }
.orb, .app, .lang, .power, .tray, .clock { position: relative; }
.orb { width: 50px; margin-left: 8px; }
.app { width: 58px; height: 38px; margin: 0 2px; display: flex; align-items: center; justify-content: center; border: 1px solid transparent; border-radius: 3px; flex: none; }
.app.on { border-color: #c9e6f6; box-shadow: 0 0 0 1px #2a6b93; background: linear-gradient(135deg, #b9dff0cc, #6fb8e199 50%, #58acdf80); }
.app.bright { background: linear-gradient(135deg, #f0f8fc, #bcdff0 45%, #a0d2ec); }
.lang { margin-right: 11px; margin-top: -7px; letter-spacing: -.3px; }
.power { width: 99px; height: 38px; border: 1px solid #5b83ae; border-bottom: 0; border-right-color: #12305a; border-radius: 12px 0 0 0; background: linear-gradient(120deg, #557ba5, #235287 35%, #1b4c88); display: flex; align-items: center; padding-left: 14px; gap: 11px; }
.battery { position: relative; width: 43px; height: 20px; border: 1px solid #fff; background: linear-gradient(#2b2b2b, #000 50%); text-align: center; line-height: 18px; font-size: 12px; flex: none; }
.battery i { position: absolute; left: 1px; top: 1px; width: 3px; height: 16px; background: #f1a73a; }
.battery::after { content: ""; position: absolute; right: -4px; top: 4px; width: 3px; height: 10px; border: 1px solid #fff; border-left: 0; background: #000; }
.tray { display: flex; margin-left: 2px; } .tray span { width: 24px; display: flex; justify-content: center; }
.clock { width: 75px; padding-left: 4px; display: flex; flex-direction: column; align-items: center; line-height: 17px; font-size: 12px; letter-spacing: -.42px; white-space: nowrap; }
.desk { width: 15px; height: 38px; position: relative; border: 1px solid #6989ad; background: linear-gradient(#4f6f96, #173c69 50%, #1e4d80); }
</style>
